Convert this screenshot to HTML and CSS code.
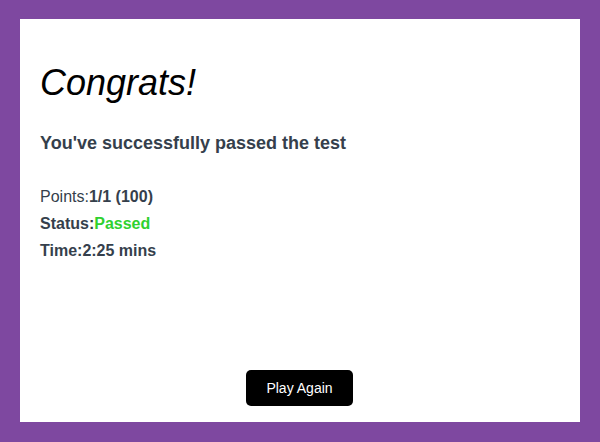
FILE: index.html
```html
<!DOCTYPE html>
<html lang="en">
<head>
<meta charset="utf-8">
<title>Congrats</title>
<link rel="stylesheet" href="styles.css">
</head>
<body>
<main class="card">
  <h1 class="title">Congrats!</h1>
  <h3 class="subtitle">You've successfully passed the test</h3>
  <div class="stats">
    <p class="stat">Points:<b>1/1 (100)</b></p>
    <p class="stat"><b>Status:</b><b class="passed">Passed</b></p>
    <p class="stat"><b>Time:2:25 mins</b></p>
  </div>
  <div class="actions">
    <button class="btn">Play Again</button>
  </div>
</main>
</body>
</html>
```
FILE: styles.css
```css
html, body {
  margin: 0;
  height: 100%;
}
body {
  background: #7e48a0;
  padding: 19px 20px 20px 20px;
  box-sizing: border-box;
  font-family: "Liberation Sans", Arial, sans-serif;
}
.card {
  background: #fff;
  height: 403px;
  box-sizing: border-box;
  padding: 20px 20px 16px 20px;
  display: flex;
  flex-direction: column;
}
.title {
  margin: 23px 0 0 0;
  font-size: 36px;
  font-style: italic;
  font-weight: normal;
  color: #000;
  line-height: 41px;
}
.subtitle {
  margin: 30px 0 0 0;
  font-size: 18px;
  font-weight: bold;
  color: #353f4c;
  line-height: 20px;
}
.stats {
  margin-top: 30px;
  color: #353f4c;
  font-size: 16px;
}
.stat {
  margin: 0;
  line-height: 27px;
}
.passed {
  color: #2fd12f;
}
.actions {
  margin-top: auto;
  display: flex;
  justify-content: center;
}
.btn {
  background: #000;
  color: #fff;
  border: none;
  border-radius: 5px;
  width: 107px;
  height: 36px;
  margin-right: 1px;
  font-family: "Liberation Sans", Arial, sans-serif;
  font-size: 14px;
  padding: 0;
}
```
